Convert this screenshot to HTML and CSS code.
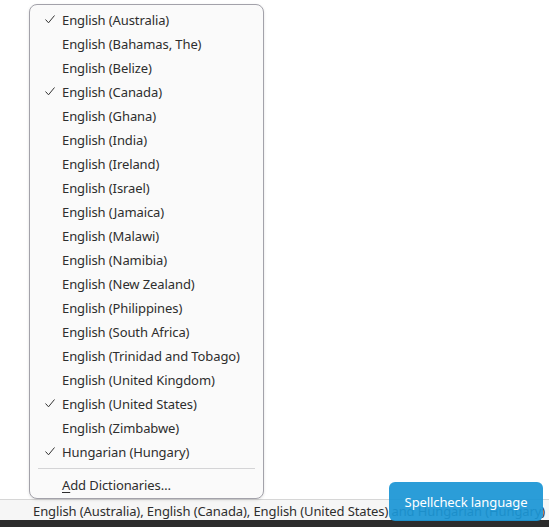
FILE: index.html
```html
<!DOCTYPE html>
<html>
  <head>
    <title>Spellcheck</title>
    <meta charset="utf-8">
    <link rel="stylesheet" href="styles.css">
  </head>
  <body>
    <div class="window">
      <div class="content">
        <!-- language popup menu -->
        <div class="menu">
          <div class="item checked">English (Australia)</div>
          <div class="item">English (Bahamas, The)</div>
          <div class="item">English (Belize)</div>
          <div class="item checked">English (Canada)</div>
          <div class="item">English (Ghana)</div>
          <div class="item">English (India)</div>
          <div class="item">English (Ireland)</div>
          <div class="item">English (Israel)</div>
          <div class="item">English (Jamaica)</div>
          <div class="item">English (Malawi)</div>
          <div class="item">English (Namibia)</div>
          <div class="item">English (New Zealand)</div>
          <div class="item">English (Philippines)</div>
          <div class="item">English (South Africa)</div>
          <div class="item">English (Trinidad and Tobago)</div>
          <div class="item">English (United Kingdom)</div>
          <div class="item checked">English (United States)</div>
          <div class="item">English (Zimbabwe)</div>
          <div class="item checked">Hungarian (Hungary)</div>
          <div class="separator"></div>
          <div class="item"><u>A</u>dd Dictionaries…</div>
        </div>
      </div>
      <div class="statusbar">English (Australia), English (Canada), English (United States) and Hungarian (Hungary)</div>
      <div class="dock"></div>
      <div class="tooltip">Spellcheck language</div>
    </div>
  </body>
</html>
```
FILE: styles.css
```css
body {
  margin: 0;
  font-family: "Noto Sans", "Open Sans", sans-serif;
  font-size: 13px;
  letter-spacing: -0.1px;
  color: #2e2e2e;
  background-color: white;
}
.window {
  position: relative;
  height: 527px;
  display: flex;
  flex-direction: column;
  overflow: hidden;
}
.content {
  flex: 1;
  position: relative;
}
.menu {
  position: absolute;
  top: 4px;
  left: 29px;
  width: 233px;
  padding: 3px 0 1px 0;
  background-color: #fafafa;
  border: 1px solid #a3a2aa;
  border-radius: 8px;
  box-shadow: 0 1px 3px rgba(0,0,0,0.12);
  z-index: 2;
}
.item {
  height: 24px;
  line-height: 24px;
  padding-left: 32px;
  white-space: nowrap;
  position: relative;
}
.item u {
  text-underline-offset: 2px;
}
.checked::before {
  content: "";
  position: absolute;
  left: 15px;
  top: 7px;
  width: 10px;
  height: 9px;
  background: url("data:image/svg+xml;utf8,<svg xmlns='http://www.w3.org/2000/svg' width='10' height='9' viewBox='0 0 10 9'><polyline points='0.5,4.5 3.5,7.8 9.5,0.5' fill='none' stroke='%23333' stroke-width='1'/></svg>") no-repeat;
}
.separator {
  height: 1px;
  margin: 4px 8px;
  background-color: #d4d4d6;
}
.statusbar {
  height: 20px;
  line-height: 22px;
  padding-left: 33px;
  border-top: 1px solid #d6d6d6;
  background-color: #f6f6f6;
  white-space: nowrap;
}
.dock {
  height: 7px;
  background-color: #2c2c2c;
}
.tooltip {
  position: absolute;
  left: 389px;
  top: 482px;
  width: 154px;
  height: 39px;
  line-height: 41px;
  text-align: center;
  color: white;
  background-color: rgba(27, 150, 213, 0.93);
  border-radius: 6px;
  z-index: 3;
}
```
